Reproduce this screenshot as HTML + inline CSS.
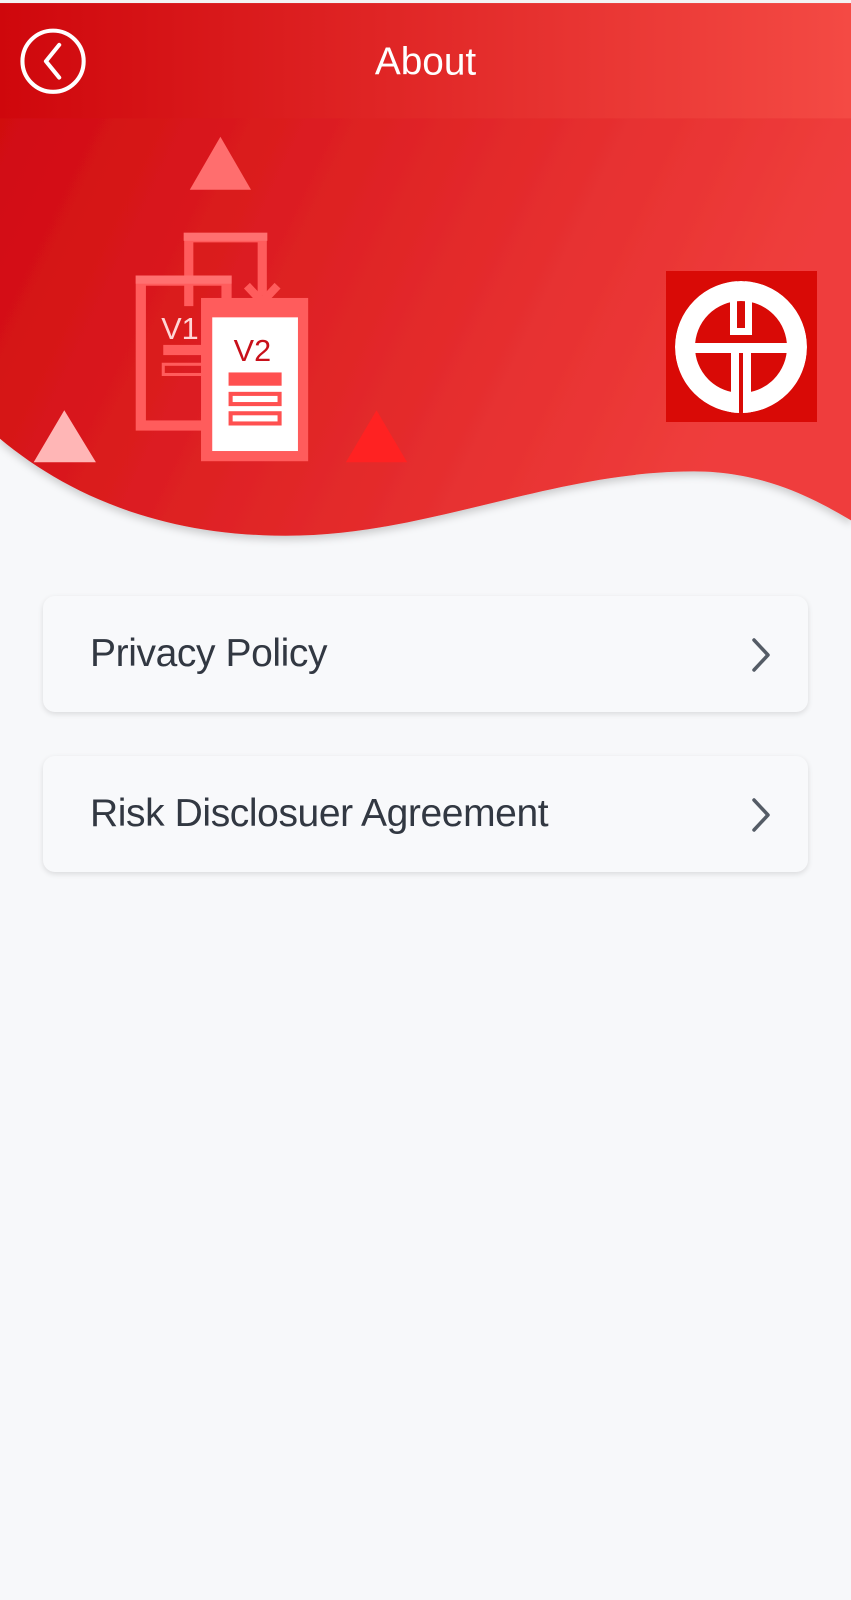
<!DOCTYPE html>
<html><head><meta charset="utf-8"><style>
html,body{margin:0;padding:0;}
body{width:851px;height:1600px;background:#f7f8fa;position:relative;overflow:hidden;font-family:"Liberation Sans",sans-serif;}
svg.bg{position:absolute;left:0;top:0;width:851px;height:1600px;}
.card{position:absolute;left:43px;width:765px;height:116px;background:#f8f9fb;border-radius:12px;box-shadow:0 2px 6px rgba(0,0,0,0.12);}
.card span{position:absolute;left:47px;top:0;line-height:116px;font-size:39px;color:#323842;letter-spacing:-0.4px;}
.card svg{position:absolute;right:35px;top:41px;}
</style></head><body>
<svg class="bg" viewBox="0 0 834 1568" preserveAspectRatio="none">
<defs>
<linearGradient id="g1" x1="0" y1="0" x2="1" y2="0.3"><stop offset="0" stop-color="#cf080e"/><stop offset="1" stop-color="#ef3e3c"/></linearGradient>
<linearGradient id="g2" x1="0" y1="0" x2="1" y2="0"><stop offset="0" stop-color="#cf070c"/><stop offset="1" stop-color="#f44a44"/></linearGradient>
<filter id="sh" x="-5%" y="-5%" width="110%" height="120%"><feDropShadow dx="0" dy="4" stdDeviation="4" flood-color="#000" flood-opacity="0.18"/></filter>
</defs>
<path filter="url(#sh)" d="M0,0 L834,0 L834,510 C800,490 750,462 680,462 C540,462 420,525 280,525 C150,525 60,480 0,430 Z" fill="url(#g1)"/>
<rect x="0" y="3" width="834" height="113" fill="url(#g2)"/>
<rect x="0" y="0" width="834" height="3" fill="#f3f3f3"/>
<circle cx="52" cy="60" r="30" fill="none" stroke="#fff" stroke-width="4"/>
<path d="M58,44 L45,60 L58,76" fill="none" stroke="#fff" stroke-width="4" stroke-linecap="round" stroke-linejoin="round"/>
<text x="417" y="73" text-anchor="middle" fill="#fff" font-family="Liberation Sans, sans-serif" font-size="38">About</text>
<polygon points="186,186 216,134 246,186" fill="#ff6e6e"/>
<polygon points="33,453 63,402 94,453" fill="#ffb6b6"/>
<polygon points="339,453 369,402 399,453" fill="#ff2222"/>
<path d="M185,300 L185,233 L257,233 L257,290" fill="none" stroke="#ff5c5c" stroke-width="9"/>
<rect x="180" y="228" width="82" height="8" fill="#ff7070"/>
<path d="M242,280 L257,296 L272,280" fill="none" stroke="#ff5c5c" stroke-width="8"/>
<rect x="138" y="275" width="84" height="142" fill="none" stroke="#ff5c5c" stroke-width="10"/>
<rect x="133" y="270" width="94" height="8" fill="#ff7070"/>
<text x="158" y="332" fill="#ffd6d6" font-family="Liberation Sans, sans-serif" font-size="30">V1</text>
<rect x="160" y="338" width="40" height="10" fill="#ff5c5c"/>
<rect x="160" y="357" width="40" height="10" fill="none" stroke="#ff5c5c" stroke-width="3"/>
<rect x="197" y="292" width="105" height="160" fill="#ff5c5c"/>
<rect x="208" y="311" width="84" height="131" fill="#fff"/>
<text x="229" y="354" fill="#c8101a" font-family="Liberation Sans, sans-serif" font-size="30">V2</text>
<rect x="224" y="365" width="52" height="13" fill="#ff5050"/>
<rect x="226" y="386" width="48" height="10" fill="none" stroke="#ff5050" stroke-width="4"/>
<rect x="226" y="405" width="48" height="10" fill="none" stroke="#ff5050" stroke-width="4"/>
<rect x="653" y="266" width="147" height="147" fill="#d90a06"/>
</svg>
<svg style="position:absolute;left:666px;top:271px" width="151" height="151" viewBox="0 0 151 151">
<defs><clipPath id="cc"><circle cx="75" cy="76" r="66"/></clipPath></defs>
<rect width="151" height="151" fill="#d90a06"/>
<g clip-path="url(#cc)">
<circle cx="75" cy="76" r="56" fill="none" stroke="#fff" stroke-width="20"/>
<rect x="20" y="72" width="112" height="10" fill="#fff"/>
<path d="M64,0 L64,64 L86,64 L86,0 L79,0 L79,57 L71,57 L71,0 Z" fill="#fff"/>
<rect x="65" y="82" width="8" height="70" fill="#fff"/>
<rect x="77" y="82" width="8" height="70" fill="#fff"/>
<rect x="73" y="82" width="4" height="70" fill="#d90a06"/>
</g>
</svg>
<div class="card" style="top:596px"><span>Privacy Policy</span>
<svg width="24" height="36" viewBox="0 0 24 36"><path d="M5,3 L19,18 L5,33" fill="none" stroke="#555c66" stroke-width="3.5" stroke-linecap="round" stroke-linejoin="round"/></svg></div>
<div class="card" style="top:756px"><span>Risk Disclosuer Agreement</span>
<svg width="24" height="36" viewBox="0 0 24 36"><path d="M5,3 L19,18 L5,33" fill="none" stroke="#555c66" stroke-width="3.5" stroke-linecap="round" stroke-linejoin="round"/></svg></div>
</body></html>
